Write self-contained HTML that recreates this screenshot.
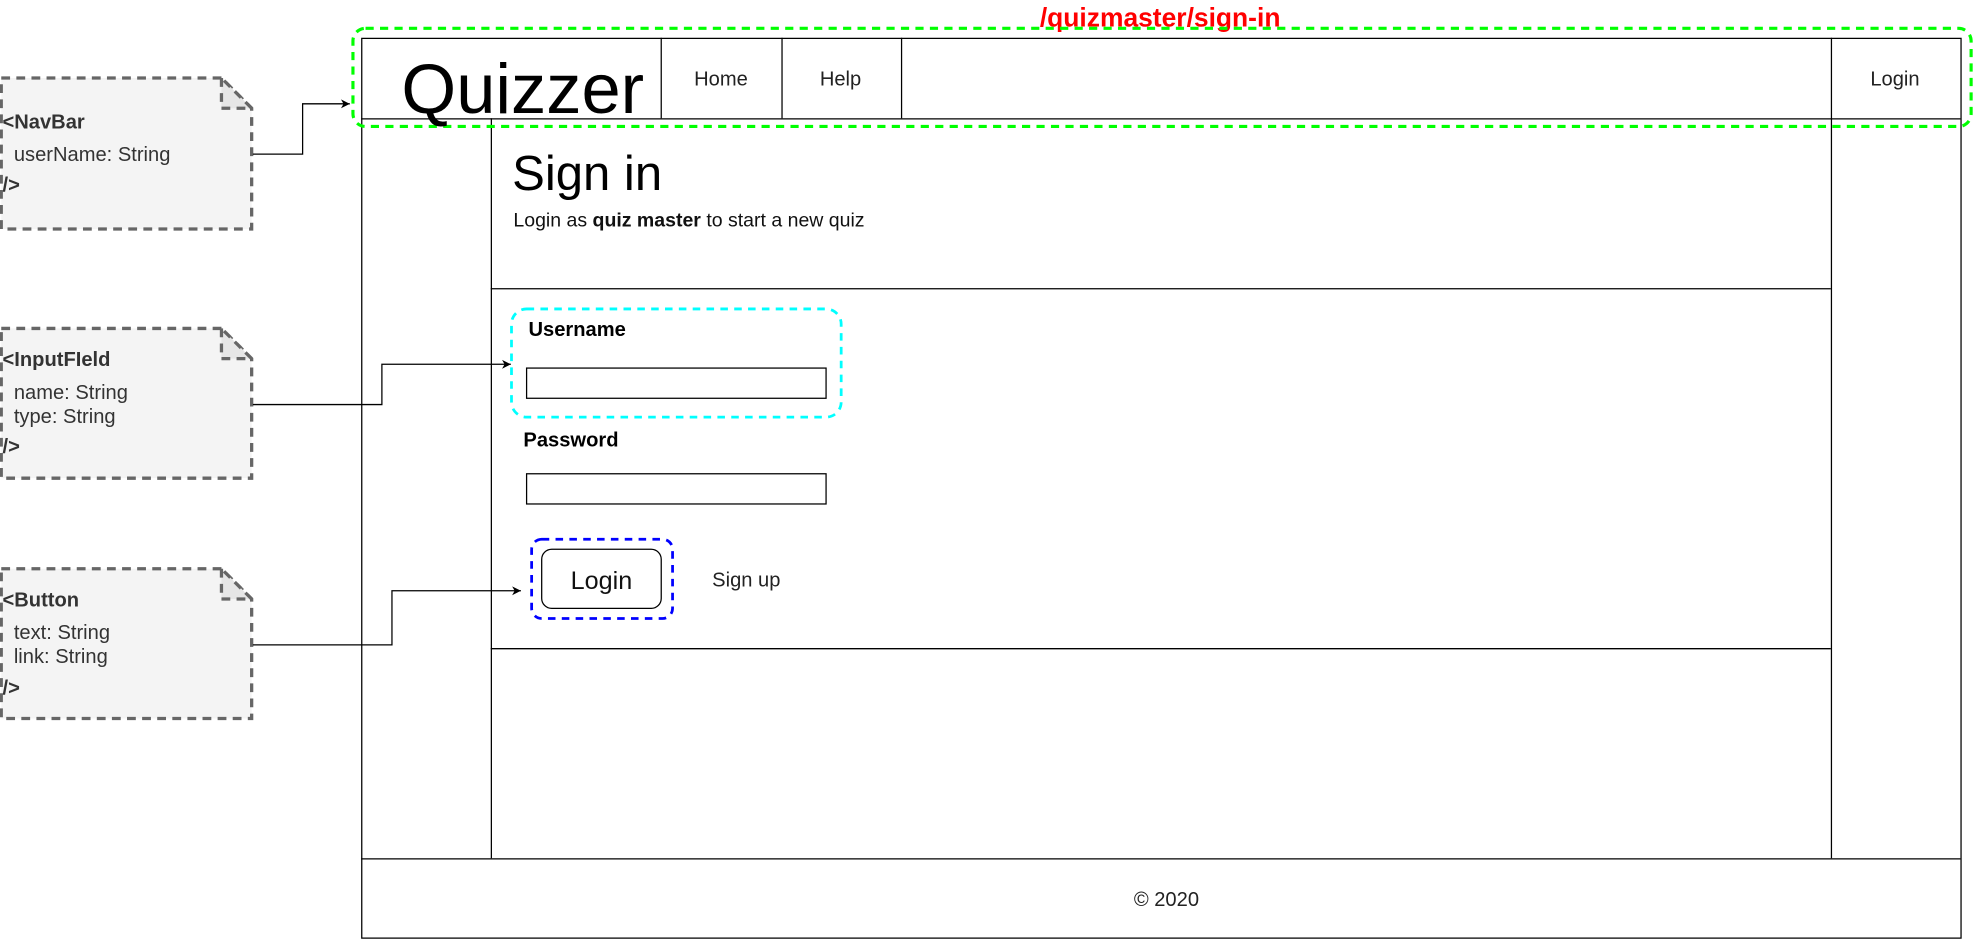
<!DOCTYPE html>
<html><head><meta charset="utf-8"><style>
html,body{margin:0;padding:0;background:#fff;width:1973px;height:940px;overflow:hidden}
svg{display:block}
text{font-family:"Liberation Sans",Arial,sans-serif}
</style></head><body>
<svg width="1973" height="940" viewBox="0 0 1568 747" preserveAspectRatio="none" xmlns="http://www.w3.org/2000/svg">
<defs><marker id="ar" markerWidth="8" markerHeight="8" refX="7" refY="4" orient="auto" markerUnits="userSpaceOnUse"><path d="M0,0.5 L7,4 L0,7.5 L2,4 Z" fill="#000"/></marker></defs>
<text x="922" y="21" font-size="21" font-weight="bold" fill="#ff0000" text-anchor="middle">/quizmaster/sign-in</text>
<!-- main frame -->
<g fill="none" stroke="#000" stroke-width="1">
<rect x="287.5" y="30.5" width="1271" height="715"/>
<line x1="287" y1="94.5" x2="1558" y2="94.5"/>
<line x1="525.5" y1="30" x2="525.5" y2="94"/>
<line x1="621.5" y1="30" x2="621.5" y2="94"/>
<line x1="716.5" y1="30" x2="716.5" y2="94"/>
<line x1="1455.5" y1="30" x2="1455.5" y2="682"/>
<line x1="390.5" y1="94" x2="390.5" y2="682"/>
<line x1="390" y1="229.5" x2="1455" y2="229.5"/>
<line x1="390" y1="515.5" x2="1455" y2="515.5"/>
<line x1="287" y1="682.5" x2="1558" y2="682.5"/>
<rect x="418.5" y="292.5" width="238" height="24"/>
<rect x="418.5" y="376.5" width="238" height="24"/>
<rect x="430.5" y="436.5" width="95" height="47" rx="8"/>
</g>
<rect x="280.5" y="22.5" width="1286" height="78" rx="10" fill="none" stroke="#00ff00" stroke-width="2.5" stroke-dasharray="6.5,5"/>
<rect x="406.5" y="245.5" width="262" height="86" rx="12" fill="none" stroke="#00ffff" stroke-width="2.2" stroke-dasharray="6,5"/>
<rect x="422.5" y="428.5" width="112" height="63" rx="8" fill="none" stroke="#0000ff" stroke-width="2.2" stroke-dasharray="6,5"/>
<text x="319" y="90" font-size="56" fill="#000">Quizzer</text>
<text x="573" y="68" font-size="16" fill="#222" text-anchor="middle">Home</text>
<text x="668" y="68" font-size="16" fill="#222" text-anchor="middle">Help</text>
<text x="1506" y="68" font-size="16" fill="#222" text-anchor="middle">Login</text>
<text x="407" y="151" font-size="39" fill="#000">Sign in</text>
<text x="408" y="180" font-size="15.5" fill="#111">Login as <tspan font-weight="bold">quiz master</tspan> to start a new quiz</text>
<text x="420" y="267" font-size="16" font-weight="bold" fill="#000">Username</text>
<text x="416" y="355" font-size="16" font-weight="bold" fill="#000">Password</text>
<text x="478" y="468" font-size="20" fill="#111" text-anchor="middle">Login</text>
<text x="566" y="466" font-size="16" fill="#222">Sign up</text>
<text x="927" y="720" font-size="16" fill="#222" text-anchor="middle">© 2020</text>
<!-- notes -->
<g stroke="#666" stroke-width="2.6" stroke-dasharray="7,5">
<path d="M1,62 H176 L200,86 V182 H1 Z" fill="#f4f4f4"/>
<path d="M176,62 V86 H200 Z" fill="#e6e6e6"/>
<path d="M1,261 H176 L200,285 V380 H1 Z" fill="#f4f4f4"/>
<path d="M176,261 V285 H200 Z" fill="#e6e6e6"/>
<path d="M1,452 H176 L200,476 V571 H1 Z" fill="#f4f4f4"/>
<path d="M176,452 V476 H200 Z" fill="#e6e6e6"/>
</g>
<g font-size="16" fill="#333">
<text x="2" y="102" font-weight="bold">&lt;NavBar</text>
<text x="11" y="128">userName: String</text>
<text x="2" y="152" font-weight="bold">/&gt;</text>
<text x="2" y="291" font-weight="bold">&lt;InputFIeld</text>
<text x="11" y="317">name: String</text>
<text x="11" y="336">type: String</text>
<text x="2" y="360" font-weight="bold">/&gt;</text>
<text x="2" y="482" font-weight="bold">&lt;Button</text>
<text x="11" y="508">text: String</text>
<text x="11" y="527">link: String</text>
<text x="2" y="552" font-weight="bold">/&gt;</text>
</g>
<g fill="none" stroke="#000" stroke-width="1">
<path d="M201,122.5 H240.5 V82.5 H278" marker-end="url(#ar)"/>
<path d="M201,321.5 H303.5 V289.5 H406" marker-end="url(#ar)"/>
<path d="M201,512.5 H311.5 V469.5 H414" marker-end="url(#ar)"/>
</g>
</svg>
</body></html>
